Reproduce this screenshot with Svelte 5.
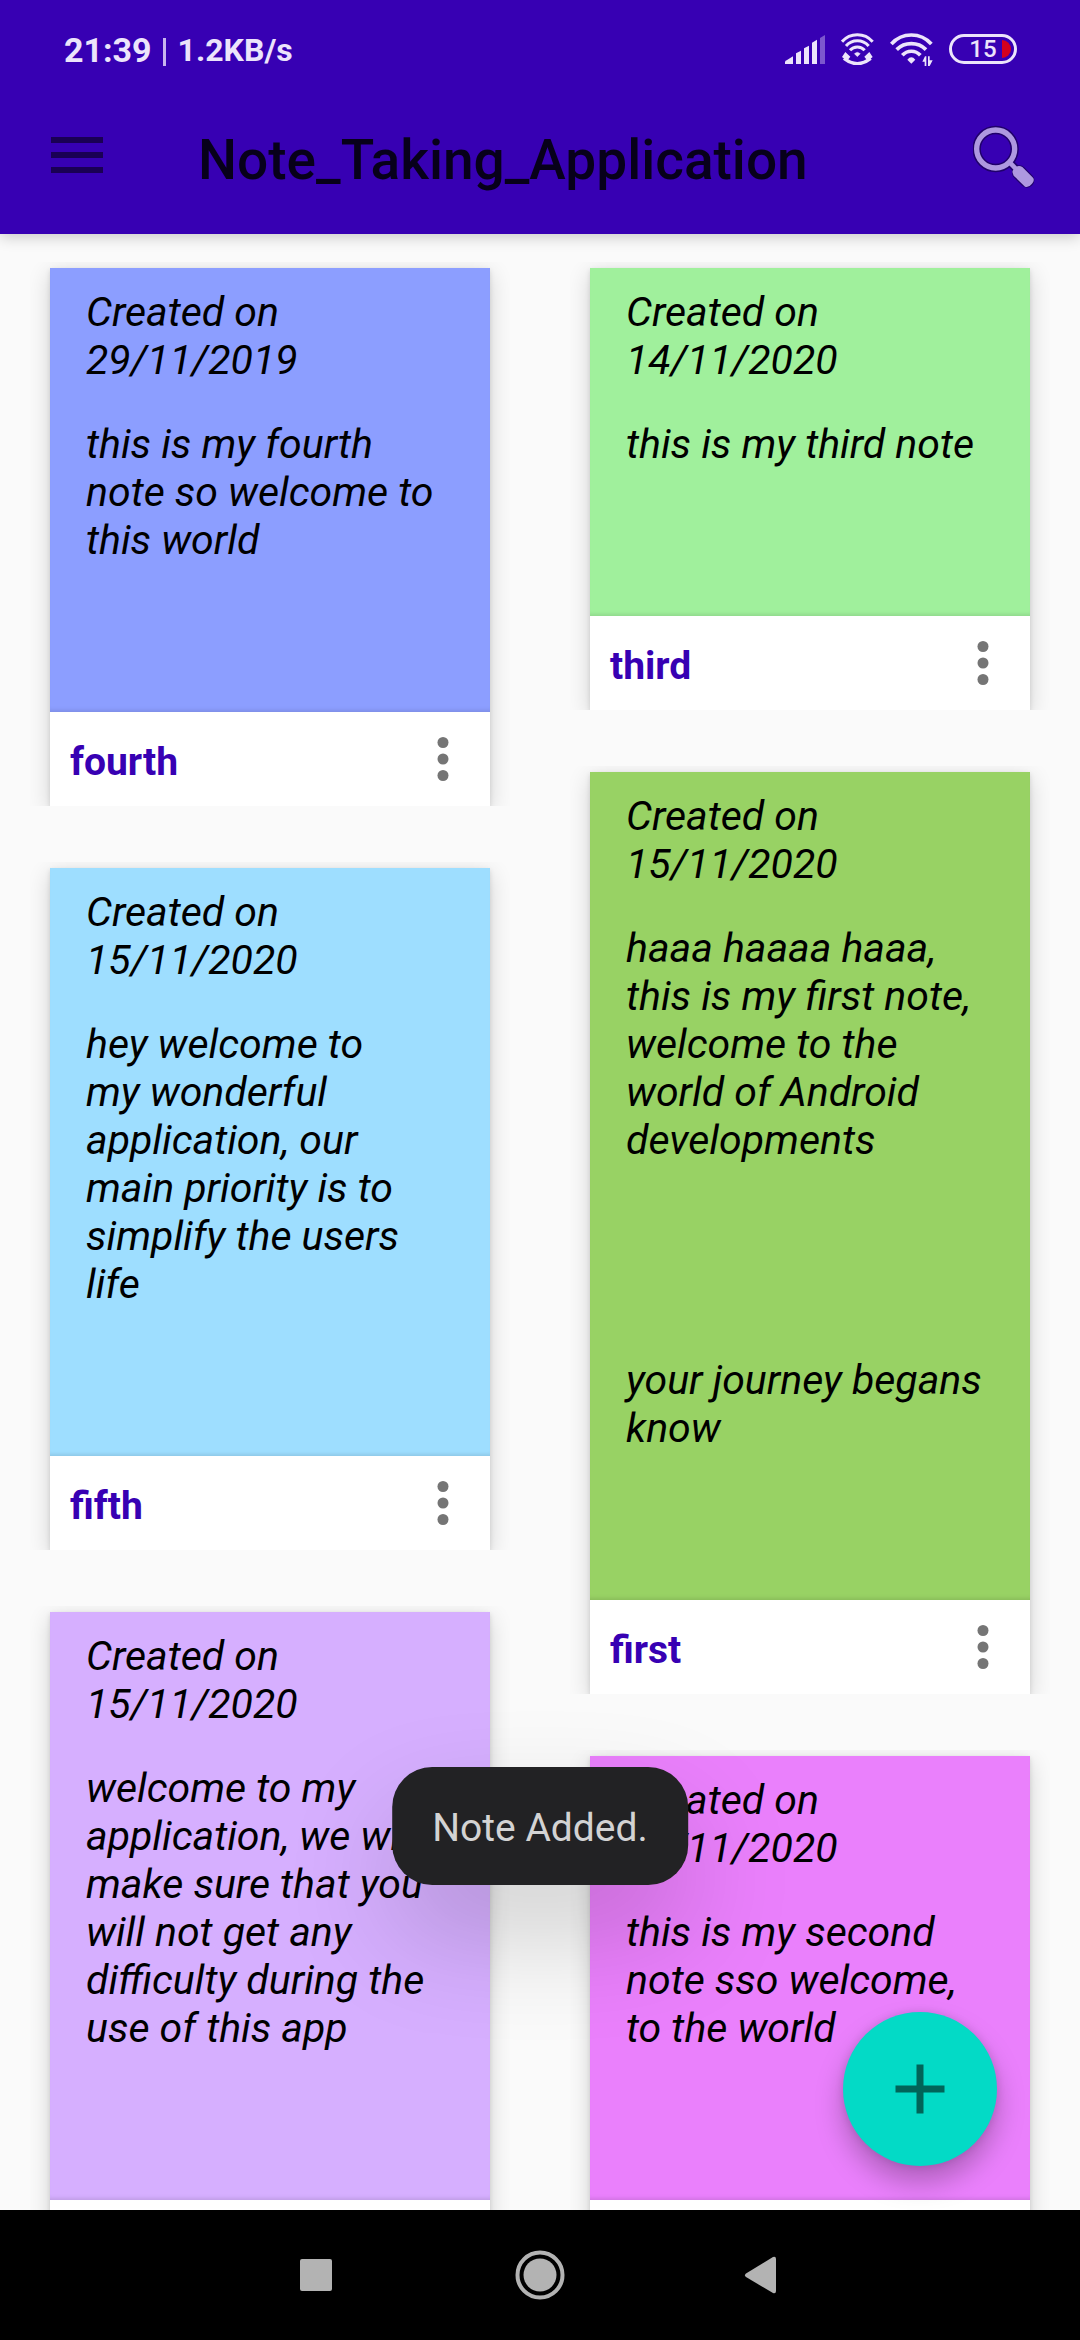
<script>
  const columns = [
    [
      {
        title: 'fourth',
        date: '29/11/2019',
        color: '#8c9eff',
        text: 'this is my fourth\nnote so welcome to\nthis world'
      },
      {
        title: 'fifth',
        date: '15/11/2020',
        color: '#9edeff',
        text: 'hey welcome to\nmy wonderful\napplication, our\nmain priority is to\nsimplify the users\nlife'
      },
      {
        title: '',
        date: '15/11/2020',
        color: '#d6afff',
        text: 'welcome to my\napplication, we will\nmake sure that you\nwill not get any\ndifficulty during the\nuse of this app'
      }
    ],
    [
      { title: 'third', date: '14/11/2020', color: '#a0f09c', text: 'this is my third note' },
      {
        title: 'first',
        date: '15/11/2020',
        color: '#98d264',
        text: 'haaa haaaa haaa,\nthis is my first note,\nwelcome to the\nworld of Android\ndevelopments\n\n\n\n\nyour journey begans\nknow'
      },
      {
        title: '',
        date: '15/11/2020',
        color: '#ea80fc',
        text: 'this is my second\nnote sso welcome,\nto the world'
      }
    ]
  ];
</script>

<div class="screen">
  <header>
    <div class="status">
      <span class="time">21:39</span>
      <span class="divider"></span>
      <span class="speed">1.2KB/s</span>
      <div class="indicators">
        <svg width="40" height="29" viewBox="0 0 120 87" fill="#ece4fb" aria-hidden="true">
          <path d="M0 87V81Q1 77 5 76L24 64V87ZM33 87V55L48 47V87ZM57 87V40L72 32V87ZM81 87V23L96 14V87Z" />
          <path d="M105 87V9L120 0V87Z" opacity=".38" />
        </svg>
        <svg width="33" height="32" viewBox="244 98 99 96" fill="none" stroke="#ece4fb" aria-hidden="true">
          <path d="M247 124A61 61 0 0 1 339 124M259 137A45 45 0 0 1 327 137M271 150A29 29 0 0 1 315 150" stroke-width="9" />
          <path d="M284 160Q293 151 302 160L293 169Z" fill="#ece4fb" />
          <path d="M253 174Q293 206 333 174" stroke-width="10" />
          <path d="M247 170L257 155L272 169L262 182ZM339 170L329 155L314 169L324 182Z" fill="#ece4fb" stroke="none" />
        </svg>
        <svg width="43" height="33" viewBox="389 101 129 99" fill="none" stroke="#ece4fb" aria-hidden="true">
          <path d="M393 134A80 80 0 0 1 513 134M409 151A63 63 0 0 1 497 151M426 168A36 36 0 0 1 480 168" stroke-width="11" />
          <path d="M441 181Q453 167 465 181L453 193Z" fill="#ece4fb" stroke="none" />
          <path d="M486 187L494 171H498V200H493V187ZM503 171H508V183H517L508 200H503Z" fill="#ece4fb" stroke="none" />
        </svg>
        <span class="battery">15</span>
      </div>
    </div>
    <div class="appbar">
      <button class="menu" aria-label="Open menu">
        <svg width="52" height="36" viewBox="0 0 52 36" fill="#1a0054">
          <path d="M0 0H52V6H0ZM0 15H52V21H0ZM0 30H52V36H0Z" />
        </svg>
      </button>
      <h1>Note_Taking_Application</h1>
      <button class="search" aria-label="Search">
        <svg width="64" height="66" viewBox="636 372 192 198" fill="none">
          <g stroke="#20006b">
            <circle cx="704" cy="447" r="57" stroke-width="25" />
            <path d="M745 486L766 508" stroke-width="24" />
            <path d="M775 518L798 541" stroke-width="44" stroke-linecap="round" />
          </g>
          <g stroke="#ae98e0">
            <circle cx="704" cy="447" r="57" stroke-width="16" />
            <path d="M743 484L770 512" stroke-width="14" />
            <path d="M755 519Q753 513 757 509L766 500Q775 496 784 501L816 533Q822 541 813 551Q803 564 792 560L758 527Z" fill="#ae98e0" stroke="none" />
          </g>
        </svg>
      </button>
    </div>
  </header>

  <div class="content">
    <main>
      {#each columns as column}
        <div class="column">
          {#each column as note}
            <article>
              <div class="note" style:background-color={note.color}>
                <p class="date">Created on<br />{note.date}</p>
                <p class="text">{note.text}</p>
              </div>
              <footer>
                {#if note.title}
                  <h2>{note.title}</h2>
                {/if}
                <button class="more" aria-label="Note options">
                  <svg width="66" height="66" viewBox="0 0 24 24" fill="#757575">
                    <circle cx="12" cy="6" r="2" />
                    <circle cx="12" cy="12" r="2" />
                    <circle cx="12" cy="18" r="2" />
                  </svg>
                </button>
              </footer>
            </article>
          {/each}
        </div>
      {/each}
    </main>
    <div class="toast" role="status">Note Added.</div>
    <button class="fab" aria-label="Add note">
      <svg width="50" height="50" viewBox="0 0 50 50" fill="#016458">
        <path d="M21.5 0.5H28.5V21.5H49.5V28.5H28.5V49.5H21.5V28.5H0.5V21.5H21.5Z" />
      </svg>
    </button>
  </div>

  <nav>
    <button aria-label="Recent apps">
      <svg width="52" height="52" viewBox="0 0 52 52" fill="#b3b3b3"><rect x="10" y="10" width="32" height="32" rx="2" /></svg>
    </button>
    <button aria-label="Home">
      <svg width="52" height="52" viewBox="0 0 52 52" fill="#b3b3b3">
        <circle cx="26" cy="26" r="16.5" />
        <circle cx="26" cy="26" r="22.5" fill="none" stroke="#b3b3b3" stroke-width="4" />
      </svg>
    </button>
    <button aria-label="Back">
      <svg width="52" height="52" viewBox="0 0 52 52" fill="#b3b3b3">
        <path d="M8 24.5L35 8Q38 7 38 10V42Q38 45 35 44L8 28Q6 26 8 24.5Z" />
      </svg>
    </button>
  </nav>
</div>

<style>
  :global(body) {
    margin: 0;
    background: #fafafa;
  }
  .screen {
    display: flex;
    flex-direction: column;
    height: 100vh;
    overflow: hidden;
    font-family: Roboto, 'Liberation Sans', sans-serif;
    color: #000;
  }
  button {
    display: flex;
    align-items: center;
    justify-content: center;
    padding: 0;
    border: 0;
    background: none;
    cursor: pointer;
  }
  svg {
    display: block;
    flex: none;
  }
  h1,
  h2,
  p {
    margin: 0;
  }
  header {
    position: relative;
    z-index: 1;
    flex: none;
    background: #3700b3;
    box-shadow: 0 3px 14px rgba(0, 0, 0, 0.2);
  }
  .status {
    display: flex;
    align-items: center;
    box-sizing: border-box;
    height: 80px;
    padding: 20px 63px 0 64px;
    color: #ece4fb;
    font-weight: 700;
  }
  .time {
    font-size: 34px;
  }
  .divider {
    width: 3px;
    height: 28px;
    margin: 4px 12px 0 11px;
    background: #c8b5ee;
  }
  .speed {
    font-size: 32px;
  }
  .indicators {
    display: flex;
    align-items: center;
    gap: 16px;
    margin: -2px 0 0 auto;
  }
  .battery {
    display: flex;
    align-items: center;
    justify-content: center;
    position: relative;
    box-sizing: border-box;
    width: 68px;
    height: 30px;
    border: 3px solid #ece4fb;
    border-radius: 15px;
    font-size: 24px;
    font-weight: 500;
    line-height: 24px;
  }
  .battery::after {
    content: '';
    position: absolute;
    right: 3px;
    top: 3px;
    width: 9px;
    height: 18px;
    border-radius: 0 9px 9px 0;
    background: #d5001c;
  }
  .appbar {
    display: flex;
    align-items: center;
    height: 154px;
    padding: 0 43px 0 35px;
  }
  .menu {
    width: 84px;
    height: 84px;
    margin-bottom: 4px;
  }
  h1 {
    flex: 1;
    padding: 6px 0 0 79px;
    font-size: 55px;
    font-weight: 500;
    line-height: 64px;
    color: #07001a;
  }
  .content {
    position: relative;
    flex: 1;
    min-height: 0;
  }
  main {
    display: grid;
    grid-template-columns: 1fr 1fr;
    gap: 100px;
    box-sizing: border-box;
    height: 100%;
    padding: 34px 50px 0;
    overflow: hidden;
  }
  .column {
    display: flex;
    flex-direction: column;
    gap: 62px;
  }
  article {
    flex: none;
    background: #fff;
    box-shadow:
      0 6px 22px rgba(0, 0, 0, 0.16),
      0 2px 5px rgba(0, 0, 0, 0.12);
    clip-path: inset(-6px -20px 0 -20px);
  }
  .note {
    display: flex;
    flex-direction: column;
    gap: 36px;
    padding: 20px 36px 148px;
    font-size: 41px;
    font-style: italic;
    line-height: 48px;
    box-shadow: inset 0 -5px 5px -4px rgba(0, 0, 0, 0.14);
  }
  .text {
    white-space: pre-line;
  }
  footer {
    display: flex;
    align-items: center;
    padding: 14px 14px 14px 20px;
  }
  .more {
    margin-left: auto;
  }
  h2 {
    padding-top: 6px;
    font-size: 39px;
    font-weight: 700;
    line-height: 46px;
    color: #3700b3;
  }
  .toast {
    position: absolute;
    bottom: 325px;
    left: 50%;
    padding: 38px 40px 33px;
    border-radius: 40px;
    background: #222224;
    color: #d3d3d3;
    font-size: 39px;
    line-height: 47px;
    white-space: nowrap;
    transform: translateX(-50%);
    box-shadow: 0 50px 110px rgba(0, 0, 0, 0.17);
  }
  .fab {
    position: absolute;
    right: 83px;
    bottom: 44px;
    width: 154px;
    height: 154px;
    border-radius: 50%;
    background: #03dac6;
    box-shadow:
      0 16px 28px rgba(0, 0, 0, 0.26),
      0 0 8px rgba(0, 0, 0, 0.12);
  }
  nav {
    display: flex;
    align-items: center;
    justify-content: center;
    gap: 172px;
    flex: none;
    height: 130px;
    background: #000;
  }
</style>
